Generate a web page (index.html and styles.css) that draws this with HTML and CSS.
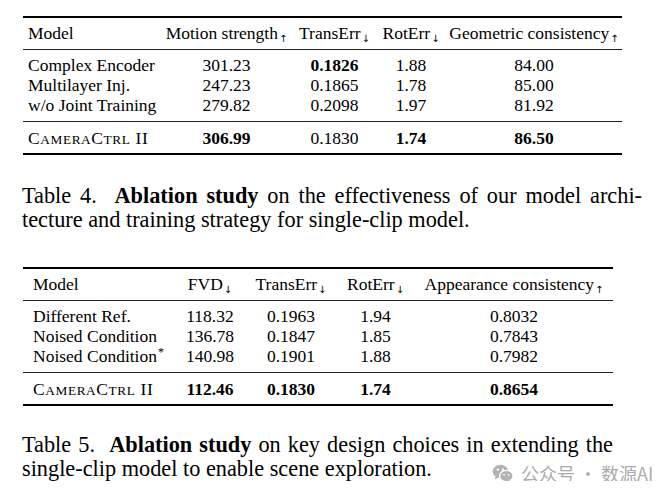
FILE: index.html
```html
<!DOCTYPE html>
<html>
<head>
<meta charset="utf-8">
<link rel="stylesheet" href="styles.css">
</head>
<body>
<div class="page">
  <table class="tbl t4">
    <colgroup>
      <col style="width:137px"><col style="width:133px"><col style="width:83px"><col style="width:70px"><col style="width:176px">
    </colgroup>
    <thead>
      <tr>
        <th class="name">Model</th>
        <th>Motion strength<sub class="ar">↑</sub></th>
        <th>TransErr<sub class="ar">↓</sub></th>
        <th>RotErr<sub class="ar">↓</sub></th>
        <th class="last">Geometric consistency<sub class="ar">↑</sub></th>
      </tr>
    </thead>
    <tbody class="ablations">
      <tr class="first"><td class="name">Complex Encoder</td><td>301.23</td><td><b>0.1826</b></td><td>1.88</td><td>84.00</td></tr>
      <tr><td class="name">Multilayer Inj.</td><td>247.23</td><td>0.1865</td><td>1.78</td><td>85.00</td></tr>
      <tr class="lastrow"><td class="name">w/o Joint Training</td><td>279.82</td><td>0.2098</td><td>1.97</td><td>81.92</td></tr>
    </tbody>
    <tbody class="ours">
      <tr><td class="name sc">C<span class="smc">AMERA</span>C<span class="smc">TRL</span> II</td><td><b>306.99</b></td><td>0.1830</td><td><b>1.74</b></td><td><b>86.50</b></td></tr>
    </tbody>
  </table>

  <p class="caption c4">
    <span class="line j">Table 4.&nbsp; <b>Ablation study</b> on the effectiveness of our model archi-</span>
    <span class="line">tecture and training strategy for single-clip model.</span>
  </p>

  <table class="tbl t5">
    <colgroup>
      <col style="width:157px"><col style="width:60px"><col style="width:102px"><col style="width:67px"><col style="width:204px">
    </colgroup>
    <thead>
      <tr>
        <th class="name">Model</th>
        <th>FVD<sub class="ar">↓</sub></th>
        <th>TransErr<sub class="ar">↓</sub></th>
        <th>RotErr<sub class="ar">↓</sub></th>
        <th class="app">Appearance consistency<sub class="ar">↑</sub></th>
      </tr>
    </thead>
    <tbody class="ablations">
      <tr class="first"><td class="name">Different Ref.</td><td>118.32</td><td>0.1963</td><td>1.94</td><td class="app">0.8032</td></tr>
      <tr><td class="name">Noised Condition</td><td>136.78</td><td>0.1847</td><td>1.85</td><td class="app">0.7843</td></tr>
      <tr class="lastrow"><td class="name">Noised Condition<sup class="star">*</sup></td><td>140.98</td><td>0.1901</td><td>1.88</td><td class="app">0.7982</td></tr>
    </tbody>
    <tbody class="ours">
      <tr><td class="name sc">C<span class="smc">AMERA</span>C<span class="smc">TRL</span> II</td><td><b>112.46</b></td><td><b>0.1830</b></td><td><b>1.74</b></td><td class="app"><b>0.8654</b></td></tr>
    </tbody>
  </table>

  <div class="cap5wrap">
    <p class="caption c5">
      <span class="line j">Table 5.&nbsp; <b>Ablation study</b> on key design choices in extending the</span>
      <span class="line">single-clip model to enable scene exploration.</span>
    </p>
    <div class="watermark">
      <svg class="wx" width="24" height="19" viewBox="0 0 20 18">
        <ellipse cx="7.6" cy="7" rx="7.4" ry="6.3" fill="#b3b3b3"/>
        <path d="M3 11.5 L2.2 14.6 L6 12.6 Z" fill="#b3b3b3"/>
        <ellipse cx="13.2" cy="11.4" rx="6.4" ry="5.4" fill="#b3b3b3" stroke="#fff" stroke-width="1.3"/>
        <path d="M16.4 15.2 L17.8 17.6 L14.2 16.4 Z" fill="#b3b3b3"/>
        <circle cx="5" cy="5.4" r="1.1" fill="#fff"/>
        <circle cx="10" cy="5.4" r="1.1" fill="#fff"/>
        <circle cx="11" cy="10.3" r="0.9" fill="#fff"/>
        <circle cx="15.4" cy="10.3" r="0.9" fill="#fff"/>
      </svg>
      <span class="wtext">公众号 · 数源AI</span>
    </div>
  </div>
</div>
</body>
</html>
```

FILE: styles.css
```css
html, body {
  margin: 0;
  padding: 0;
  background: #fff;
}

.page {
  padding: 16px 0 0 23px;
  font-family: "Liberation Serif", "Times New Roman", serif;
  color: #000;
}

.tbl {
  border-collapse: collapse;
  table-layout: fixed;
  font-size: 17.5px;
  line-height: 20px;
}

.t4 { width: 599px; }
.t5 { width: 590px; }

.tbl th, .tbl td {
  padding: 0;
  text-align: center;
  font-weight: normal;
  white-space: nowrap;
}

.tbl .name { text-align: left; }
.t4 .name { padding-left: 5px; }
.t5 .name { padding-left: 10px; }
.t5 .app { padding-left: 6px; }

.tbl thead th {
  border-top: 2px solid #000;
  border-bottom: 1px solid #222;
  padding-top: 5px;
  padding-bottom: 6px;
}

.tbl .ablations tr.first td { padding-top: 5px; }
.tbl .ablations tr.lastrow td {
  padding-bottom: 6px;
  border-bottom: 1px solid #222;
}

.tbl .ours td {
  padding-top: 6px;
  padding-bottom: 5px;
  border-bottom: 2px solid #000;
}

.ar {
  font-size: 10px;
  vertical-align: -3px;
  line-height: 0;
  margin-left: 1px;
  font-family: "DejaVu Sans", sans-serif;
}

.star {
  font-size: 12px;
  line-height: 0;
  vertical-align: 6px;
  margin-left: 1px;
}

.sc { letter-spacing: 0.6px; }
.smc { font-size: 0.76em; line-height: 0; }

.caption {
  margin: 0;
  font-size: 22.3px;
  line-height: 24px;
}

.caption .line { display: block; white-space: nowrap; }
.caption .line.j {
  white-space: normal;
  text-align: justify;
  text-align-last: justify;
}

.c4 {
  margin: 29px 0 35px -1px;
  width: 620px;
}

.cap5wrap {
  position: relative;
  margin-top: 27px;
}

.c5 {
  margin-left: -1px;
  width: 591px;
}

.watermark {
  position: absolute;
  left: 468px;
  top: 30px;
  display: flex;
  align-items: center;
  gap: 6px;
  color: #ababab;
}

.wtext {
  font-family: "Noto Sans CJK SC", "Noto Sans", sans-serif;
  font-size: 18px;
  line-height: 20px;
}
```
